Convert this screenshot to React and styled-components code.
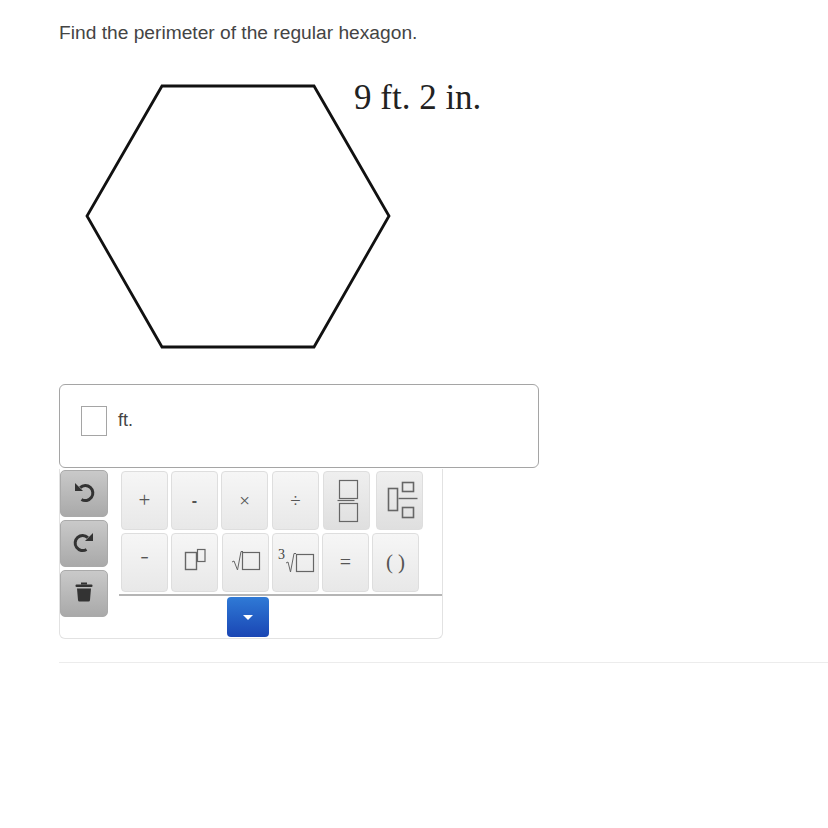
import React from "react";
import styled, { createGlobalStyle } from "styled-components";

const GlobalStyle = createGlobalStyle`
  html, body {
    margin: 0;
    padding: 0;
    background: #fff;
  }
  * {
    box-sizing: border-box;
  }
`;

const Box = ({ x, y, w, h, weight = 1.2 }) => (
  <rect x={x} y={y} width={w} height={h} fill="none" stroke="#666" strokeWidth={weight} />
);

const UndoIcon = () => (
  <svg width="22" height="22" viewBox="0 0 22 22">
    <path d="M2 2 L2 10 L10 10 Z" fill="#333" />
    <path d="M7.2 6.6 A7.5 7.5 0 1 1 8.5 18.5" fill="none" stroke="#333" strokeWidth="3" />
  </svg>
);

const RedoIcon = () => (
  <svg width="22" height="22" viewBox="0 0 22 22">
    <path d="M20 2 L20 10 L12 10 Z" fill="#333" />
    <path d="M14.8 6.6 A7.5 7.5 0 1 0 13.5 18.5" fill="none" stroke="#333" strokeWidth="3" />
  </svg>
);

const TrashIcon = () => (
  <svg width="18" height="20" viewBox="0 0 18 20">
    <rect x="6" y="0.5" width="6" height="2" fill="#333" />
    <rect x="0.5" y="2.5" width="17" height="2.5" rx="1" fill="#333" />
    <path d="M2 6.5 L16 6.5 L15 18 Q15 19.5 13.5 19.5 L4.5 19.5 Q3 19.5 3 18 Z" fill="#333" />
  </svg>
);

const Fraction = () => (
  <svg width="28" height="44" viewBox="0 0 28 44">
    <Box x={6.5} y={1.5} w={18} h={18} />
    <line x1="4.5" y1="21.5" x2="21.5" y2="21.5" stroke="#666" strokeWidth="1.2" />
    <Box x={6.5} y={24.5} w={18} h={18} />
  </svg>
);

const MixedFraction = () => (
  <svg width="36" height="42" viewBox="0 0 36 42">
    <Box x={6.5} y={8.5} w={9} h={22} weight={1.6} />
    <line x1="16.5" y1="18.5" x2="35.5" y2="18.5" stroke="#666" strokeWidth="1.4" />
    <Box x={20.5} y={2.5} w={11} h={9} weight={1.6} />
    <Box x={20.5} y={27.5} w={11} h={10} weight={1.6} />
  </svg>
);

const Power = () => (
  <svg width="22" height="23" viewBox="0 0 22 23">
    <Box x={1.5} y={4.5} w={11} h={17} weight={1.4} />
    <Box x={13.5} y={1.5} w={7.5} h={12} />
  </svg>
);

const Root = () => (
  <svg width="30" height="22" viewBox="0 0 30 22">
    <path d="M1 12 L3 11 L6.5 20 L10 1.5 L12 1.5" fill="none" stroke="#666" strokeWidth="1" />
    <Box x={11.5} y={2.5} w={17} h={17} />
  </svg>
);

const CubeRoot = () => (
  <svg width="38" height="26" viewBox="0 0 38 26">
    <text x="1" y="10.5" fontFamily="Liberation Serif" fontSize="14" fill="#444">3</text>
    <path d="M9 15 L11 14 L13.5 24 L17 5.5 L19 5.5" fill="none" stroke="#666" strokeWidth="1" />
    <Box x={19.5} y={6.5} w={17} h={17} />
  </svg>
);

const rowOne = [
  { id: "plus", label: "+", serif: true, size: 21 },
  { id: "minus", label: "-", bold: true, size: 16 },
  { id: "times", label: "×", serif: true, size: 19 },
  { id: "divide", label: "÷", serif: true, size: 19, shift: 1 },
];

export default function App() {
  return (
    <>
      <GlobalStyle />
      <Page>
        <Question>Find the perimeter of the regular hexagon.</Question>

        <Figure>
          <svg width="440" height="284" viewBox="0 0 440 284">
            <polygon
              points="103,7 255,7 330,137 255,268 103,268 28,137"
              fill="none"
              stroke="#111"
              strokeWidth="2.8"
            />
            <text x="295" y="30" fontFamily="Liberation Serif" fontSize="35" fill="#222">
              9 ft. 2 in.
            </text>
          </svg>
        </Figure>

        <AnswerBox>
          <AnswerInput />
          <Unit>ft.</Unit>
        </AnswerBox>

        <Palette>
          <SideTools>
            <ToolButton><UndoIcon /></ToolButton>
            <ToolButton><RedoIcon /></ToolButton>
            <ToolButton><TrashIcon /></ToolButton>
          </SideTools>

          <KeyArea>
            <KeyRow>
              {rowOne.map((key) => (
                <Key key={key.id} $bold={key.bold} $serif={key.serif} $size={key.size} $shift={key.shift}>
                  {key.label}
                </Key>
              ))}
              <Key $dark $shift={1}><Fraction /></Key>
              <Key $dark $shift={3}><MixedFraction /></Key>
            </KeyRow>
            <KeyRow $second>
              <Key $bold $size={13} $lift={10}>−</Key>
              <Key $lift={6}><Power /></Key>
              <Key $lift={4} $shift={1}><Root /></Key>
              <Key $lift={4}><CubeRoot /></Key>
              <Key $serif $size={20}>=</Key>
              <Key $serif $size={21}>( )</Key>
            </KeyRow>
            <Divider />
            <ToggleRow>
              <ToggleButton><Caret /></ToggleButton>
            </ToggleRow>
          </KeyArea>
        </Palette>

        <Rule />
      </Page>
    </>
  );
}

const Page = styled.div`
  width: 828px;
  height: 828px;
  padding: 22px 0 0 59px;
  overflow: hidden;
  font-family: "Liberation Sans", Arial, sans-serif;
  color: #444;
`;

const Question = styled.div`
  font-size: 19.2px;
  line-height: 22px;
  height: 22px;
`;

const Figure = styled.div`
  height: 340px;
  padding-top: 35px;

  svg {
    display: block;
  }
`;

const AnswerBox = styled.div`
  width: 480px;
  height: 84px;
  display: flex;
  align-items: flex-start;
  gap: 11px;
  padding: 21px 0 0 21px;
  border: 1px solid #a5a5a5;
  border-radius: 6px;
`;

const AnswerInput = styled.div`
  width: 26px;
  height: 30px;
  border: 1px solid #a5a5a5;
`;

const Unit = styled.span`
  font-size: 18px;
  line-height: 28px;
`;

const Palette = styled.div`
  width: 384px;
  height: 170px;
  margin-top: 1px;
  display: flex;
  border: 1px solid #e2e2e2;
  border-top: none;
  border-radius: 0 0 6px 6px;
`;

const SideTools = styled.div`
  width: 60px;
  padding-top: 1px;
  display: flex;
  flex-direction: column;
  gap: 3px;
`;

const ToolButton = styled.div`
  width: 48px;
  height: 47px;
  padding-bottom: 3px;
  display: flex;
  align-items: center;
  justify-content: center;
  background: linear-gradient(#c9c9c9, #a9a9a9);
  border: 1px solid #aaa;
  border-radius: 5px;
`;

const KeyArea = styled.div`
  flex: 1;
  padding-top: 2px;
`;

const KeyRow = styled.div`
  display: flex;
  gap: 3px;
  padding-left: 1px;
  margin-top: ${(p) => (p.$second ? "3px" : "0")};
`;

const Key = styled.div`
  flex: none;
  width: 47px;
  height: 59px;
  margin-left: ${(p) => p.$shift || 0}px;
  padding-bottom: ${(p) => p.$lift || 0}px;
  display: flex;
  align-items: center;
  justify-content: center;
  font-family: ${(p) => (p.$serif ? '"Liberation Serif", serif' : '"Liberation Sans", Arial, sans-serif')};
  font-size: ${(p) => p.$size || 17}px;
  font-weight: ${(p) => (p.$bold ? 700 : 400)};
  color: #555;
  background: ${(p) =>
    p.$dark ? "linear-gradient(#efefef, #dfdfdf)" : "linear-gradient(#f6f6f6, #e8e8e8)"};
  border: 1px solid #dedede;
  border-radius: 4px;
`;

const Divider = styled.div`
  height: 2px;
  margin-top: 2px;
  margin-left: -1px;
  background: #b5b5b5;
`;

const ToggleRow = styled.div`
  display: flex;
  padding: 1px 0 0 107px;
`;

const ToggleButton = styled.div`
  width: 42px;
  height: 40px;
  display: flex;
  align-items: center;
  justify-content: center;
  background: linear-gradient(#2f7ad6, #1a46b4);
  border-radius: 4px;
`;

const Caret = styled.div`
  width: 0;
  height: 0;
  border-left: 5.5px solid transparent;
  border-right: 5.5px solid transparent;
  border-top: 5.5px solid #fff;
`;

const Rule = styled.div`
  height: 1px;
  margin-top: 23px;
  background: #ececec;
`;
